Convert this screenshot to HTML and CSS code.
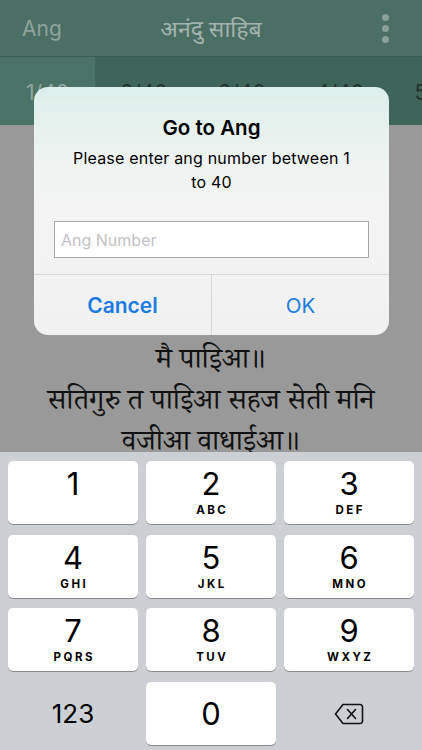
FILE: index.html
```html
<!DOCTYPE html>
<html>
<head>
<meta charset="utf-8">
<link rel="stylesheet" href="styles.css">
</head>
<body>
<div class="app">
  <div class="header">
    <span class="back">Ang</span>
    <span class="title">अनंदु साहिब</span>
    <span class="menu"><i></i><i></i><i></i></span>
  </div>
  <div class="tabs">
    <span class="tab active">1/40</span>
    <span class="tab">2/40</span>
    <span class="tab">3/40</span>
    <span class="tab">4/40</span>
    <span class="tab last">5/40</span>
  </div>
  <div class="content">
    <p class="line">मै पाइिआ॥</p>
    <p class="line">सतिगुरु त पाइिआ सहज सेती मनि</p>
    <p class="line">वजीआ वाधाईआ॥</p>
  </div>
  <div class="keyboard">
    <div class="key"><span class="num">1</span><span class="let">&nbsp;</span></div>
    <div class="key"><span class="num">2</span><span class="let">ABC</span></div>
    <div class="key"><span class="num">3</span><span class="let">DEF</span></div>
    <div class="key"><span class="num">4</span><span class="let">GHI</span></div>
    <div class="key"><span class="num">5</span><span class="let">JKL</span></div>
    <div class="key"><span class="num">6</span><span class="let">MNO</span></div>
    <div class="key"><span class="num">7</span><span class="let">PQRS</span></div>
    <div class="key"><span class="num">8</span><span class="let">TUV</span></div>
    <div class="key"><span class="num">9</span><span class="let">WXYZ</span></div>
    <div class="key plain"><span class="abc">123</span></div>
    <div class="key zero"><span class="num">0</span></div>
    <div class="key plain">
      <svg class="del" width="30" height="22" viewBox="0 0 30 22">
        <path d="M9 1.5 H26 a2.5 2.5 0 0 1 2.5 2.5 V18 a2.5 2.5 0 0 1 -2.5 2.5 H9 L1.5 11 Z" fill="none" stroke="#111" stroke-width="1.6" stroke-linejoin="round"/>
        <path d="M13.5 6.5 L21.5 15.5 M21.5 6.5 L13.5 15.5" stroke="#111" stroke-width="1.6" stroke-linecap="round"/>
      </svg>
    </div>
  </div>
</div>
<div class="dialog">
  <div class="dbody">
    <div class="dtitle">Go to Ang</div>
    <div class="dmsg">Please enter ang number between 1 to 40</div>
    <div class="dinput">Ang Number</div>
  </div>
  <div class="dbtns">
    <span class="btn cancel">Cancel</span>
    <span class="btn ok">OK</span>
  </div>
</div>
</body>
</html>
```
FILE: styles.css
```css
html, body {
  margin: 0;
  padding: 0;
}
body {
  width: 422px;
  height: 750px;
  overflow: hidden;
  position: relative;
  font-family: Inter, "Liberation Sans", sans-serif;
  background: #999;
}
.app {
  display: flex;
  flex-direction: column;
  height: 750px;
}
.header {
  height: 56px;
  flex: none;
  background: #4b6f64;
  border-bottom: 1px solid #3d5c53;
  display: flex;
  align-items: center;
  justify-content: space-between;
  padding: 0 33px 0 22px;
  position: relative;
}
.back {
  font-size: 21px;
  color: #8ea49c;
}
.title {
  position: absolute;
  left: 0;
  right: 0;
  text-align: center;
  font-size: 23px;
  color: #a3b3ad;
  font-family: "Noto Sans", "Noto Sans Devanagari", sans-serif;
}
.menu {
  display: flex;
  flex-direction: column;
  gap: 4px;
}
.menu i {
  width: 7px;
  height: 7px;
  border-radius: 50%;
  background: #8aa098;
}
.tabs {
  height: 68px;
  flex: none;
  display: flex;
  background: #3f6459;
  overflow: hidden;
}
.tab {
  width: 98px;
  flex: none;
  padding-top: 23px;
  font-size: 21px;
  color: #1f332d;
  text-align: center;
  box-sizing: border-box;
}
.tab.active {
  width: 95px;
  background: #4c7367;
  color: #8ea69d;
}
.content {
  flex: 1;
  min-height: 0;
  overflow: hidden;
  background: #999;
  padding-top: 218px;
  text-align: center;
}
.line {
  margin: 0;
  font-size: 29px;
  line-height: 41px;
  color: #111;
  font-family: "Noto Serif Devanagari", "Noto Sans Devanagari", "Noto Sans", serif;
}
.keyboard {
  height: 298px;
  flex: none;
  background: #ccd0d5;
  box-sizing: border-box;
  padding: 9px 8px 0;
  display: grid;
  grid-template-columns: 130px 130px 130px;
  grid-template-rows: 63px 63px 63px 63px;
  column-gap: 8px;
  row-gap: 10.5px;
}
.key {
  background: #fff;
  border-radius: 5px;
  box-shadow: 0 1px 0 #898b8f;
  display: flex;
  flex-direction: column;
  align-items: center;
  justify-content: center;
}
.key.plain {
  background: transparent;
  box-shadow: none;
}
.num {
  font-size: 31px;
  line-height: 32px;
  color: #000;
  font-weight: 400;
}
.let {
  font-size: 11.5px;
  font-weight: 700;
  letter-spacing: 2.5px;
  margin-right: -2.5px;
  line-height: 14px;
  margin-top: 3px;
  color: #000;
}
.zero .num {
  margin-top: 2px;
}
.abc {
  font-size: 26px;
  color: #000;
}
.del {
  margin-top: 2px;
}
.dialog {
  position: absolute;
  left: 34px;
  top: 87px;
  width: 355px;
  height: 248px;
  border-radius: 14px;
  background: linear-gradient(180deg, #dcefea 0%, #eef3f2 28%, #f4f4f4 50%, #f1f1f1 100%);
  display: flex;
  flex-direction: column;
  overflow: hidden;
}
.dbody {
  height: 188px;
  box-sizing: border-box;
  padding: 29px 20px 0;
  text-align: center;
  border-bottom: 1px solid #d8d8d8;
}
.dtitle {
  font-size: 20.5px;
  font-weight: 600;
  color: #000;
  line-height: 24px;
}
.dmsg {
  margin: 6px 12px 0;
  font-size: 16px;
  letter-spacing: 0.2px;
  line-height: 24px;
  color: #000;
}
.dinput {
  margin: 27px 0 0;
  height: 37px;
  box-sizing: border-box;
  border: 1px solid #a8a8a8;
  background: #fff;
  text-align: left;
  padding: 8px 6px 0;
  font-size: 16px;
  color: #c2c2c6;
}
.dbtns {
  flex: 1;
  display: flex;
}
.btn {
  flex: 1;
  display: flex;
  align-items: center;
  justify-content: center;
  font-size: 20.5px;
  color: #1b7ce0;
}
.cancel {
  font-size: 21px;
  font-weight: 600;
  border-right: 1px solid #d8d8d8;
}
```
